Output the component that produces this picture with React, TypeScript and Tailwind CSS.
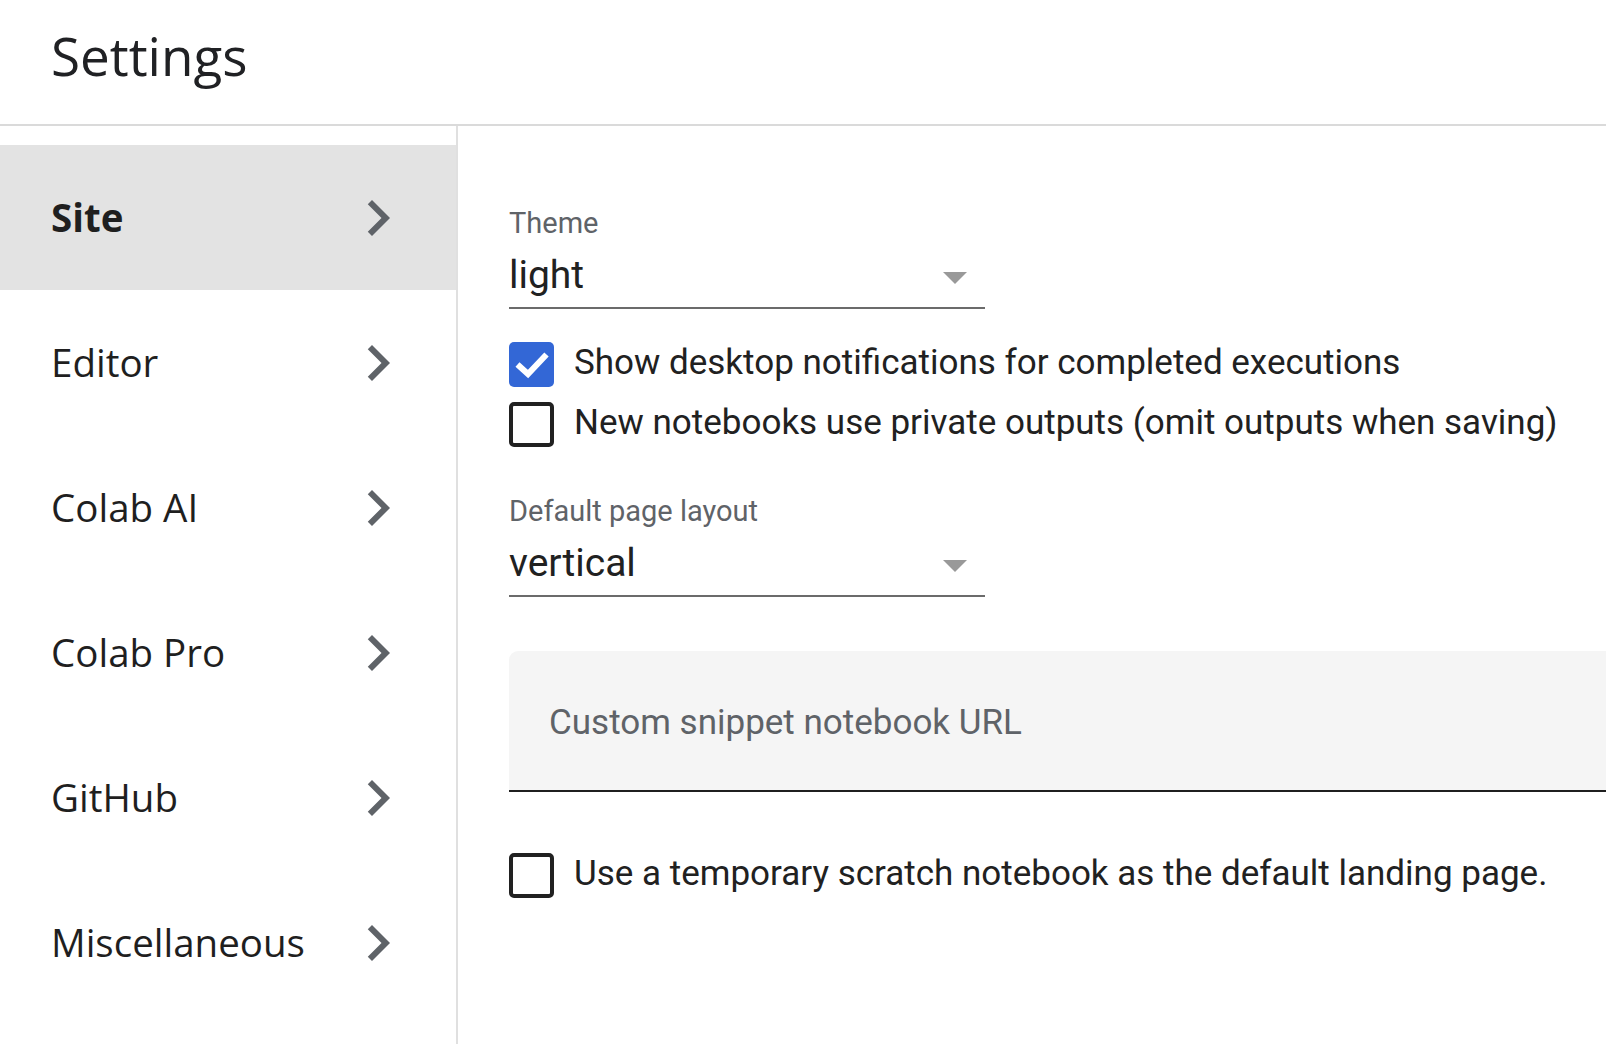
const NAV_ITEMS = ['Site', 'Editor', 'Colab AI', 'Colab Pro', 'GitHub', 'Miscellaneous'];

const Chevron = () => (
	<svg viewBox="0 0 24 24" className="w-[72px] h-[72px] fill-[#5f6368]">
		<path d="M10 6 8.59 7.41 13.17 12l-4.58 4.59L10 18l6-6z" />
	</svg>
);

const Checkbox = ({ checked }: { checked: boolean }) =>
	checked ? (
		<span className="w-[45px] h-[45px] shrink-0 rounded-[5px] bg-[#3367d6] flex items-center justify-center">
			<svg viewBox="0 0 45 45" className="w-[45px] h-[45px]">
				<polyline
					points="8.5,22.5 19,32 37.5,12.5"
					fill="none"
					stroke="white"
					strokeWidth="6"
				/>
			</svg>
		</span>
	) : (
		<span className="w-[45px] h-[45px] shrink-0 rounded-[5px] border-[4.5px] border-[#212121] bg-white" />
	);

const CheckRow = ({ checked, label }: { checked: boolean; label: string }) => (
	<label className="flex items-center h-[45px] gap-[20px]">
		<Checkbox checked={checked} />
		<span className="text-[35px] leading-[45px] text-[#212121] whitespace-nowrap -mt-[4px]">
			{label}
		</span>
	</label>
);

const Select = ({ label, value }: { label: string; value: string }) => (
	<div className="flex flex-col">
		<span className="text-[29px] leading-[36px] text-[#5f6368] mt-[2px] -mb-[2px]">{label}</span>
		<div className="w-[476px] h-[70px] border-b-2 border-[#6b6b6b] flex items-center justify-between">
			<span className="text-[39px] leading-[68px] text-[#212121] mt-[3px]">{value}</span>
			<svg viewBox="0 0 24 12" className="w-[24px] h-[12px] mr-[18px] mt-[10px] fill-[#999999]">
				<path d="M0 0h24L12 12z" />
			</svg>
		</div>
	</div>
);

const App = () => {
	return (
		<div className="w-screen h-screen overflow-hidden bg-white flex flex-col font-['Roboto',sans-serif]">
			<header className="h-[126px] shrink-0 border-b-2 border-[#dadada] flex items-center pb-[12px] pl-[51px]">
				<h1 className="text-[53px] text-[#202124] font-['Open_Sans',sans-serif] font-normal">
					Settings
				</h1>
			</header>
			<div className="flex flex-1 min-h-0">
				<nav className="w-[458px] shrink-0 border-r-2 border-[#e0e0e0] pt-[19px] font-['Open_Sans',sans-serif]">
					{NAV_ITEMS.map((item, i) => (
						<div
							key={item}
							className={`h-[145px] flex items-center justify-between pl-[51px] pr-[42px] ${
								i === 0 ? 'bg-[#e3e3e3]' : ''
							}`}
						>
							<span
								className={`text-[38.5px] text-[#1f1f1f] ${
									i === 0 ? 'font-bold' : 'font-normal'
								}`}
							>
								{item}
							</span>
							<Chevron />
						</div>
					))}
				</nav>
				<main className="flex-1 pl-[51px] pt-[77px] flex flex-col">
					<Select label="Theme" value="light" />
					<div className="mt-[33px] flex flex-col gap-[15px]">
						<CheckRow checked label="Show desktop notifications for completed executions" />
						<CheckRow
							checked={false}
							label="New notebooks use private outputs (omit outputs when saving)"
						/>
					</div>
					<div className="mt-[44px]">
						<Select label="Default page layout" value="vertical" />
					</div>
					<div className="mt-[54px] w-[1200px] h-[141px] shrink-0 bg-[#f5f5f5] rounded-t-[9px] border-b-2 border-[#1f1f1f] flex items-center pl-[40px] pt-[6px]">
						<span className="text-[35px] text-[#5f6368]">Custom snippet notebook URL</span>
					</div>
					<div className="mt-[61px]">
						<CheckRow
							checked={false}
							label="Use a temporary scratch notebook as the default landing page."
						/>
					</div>
				</main>
			</div>
		</div>
	);
};

export default App;
